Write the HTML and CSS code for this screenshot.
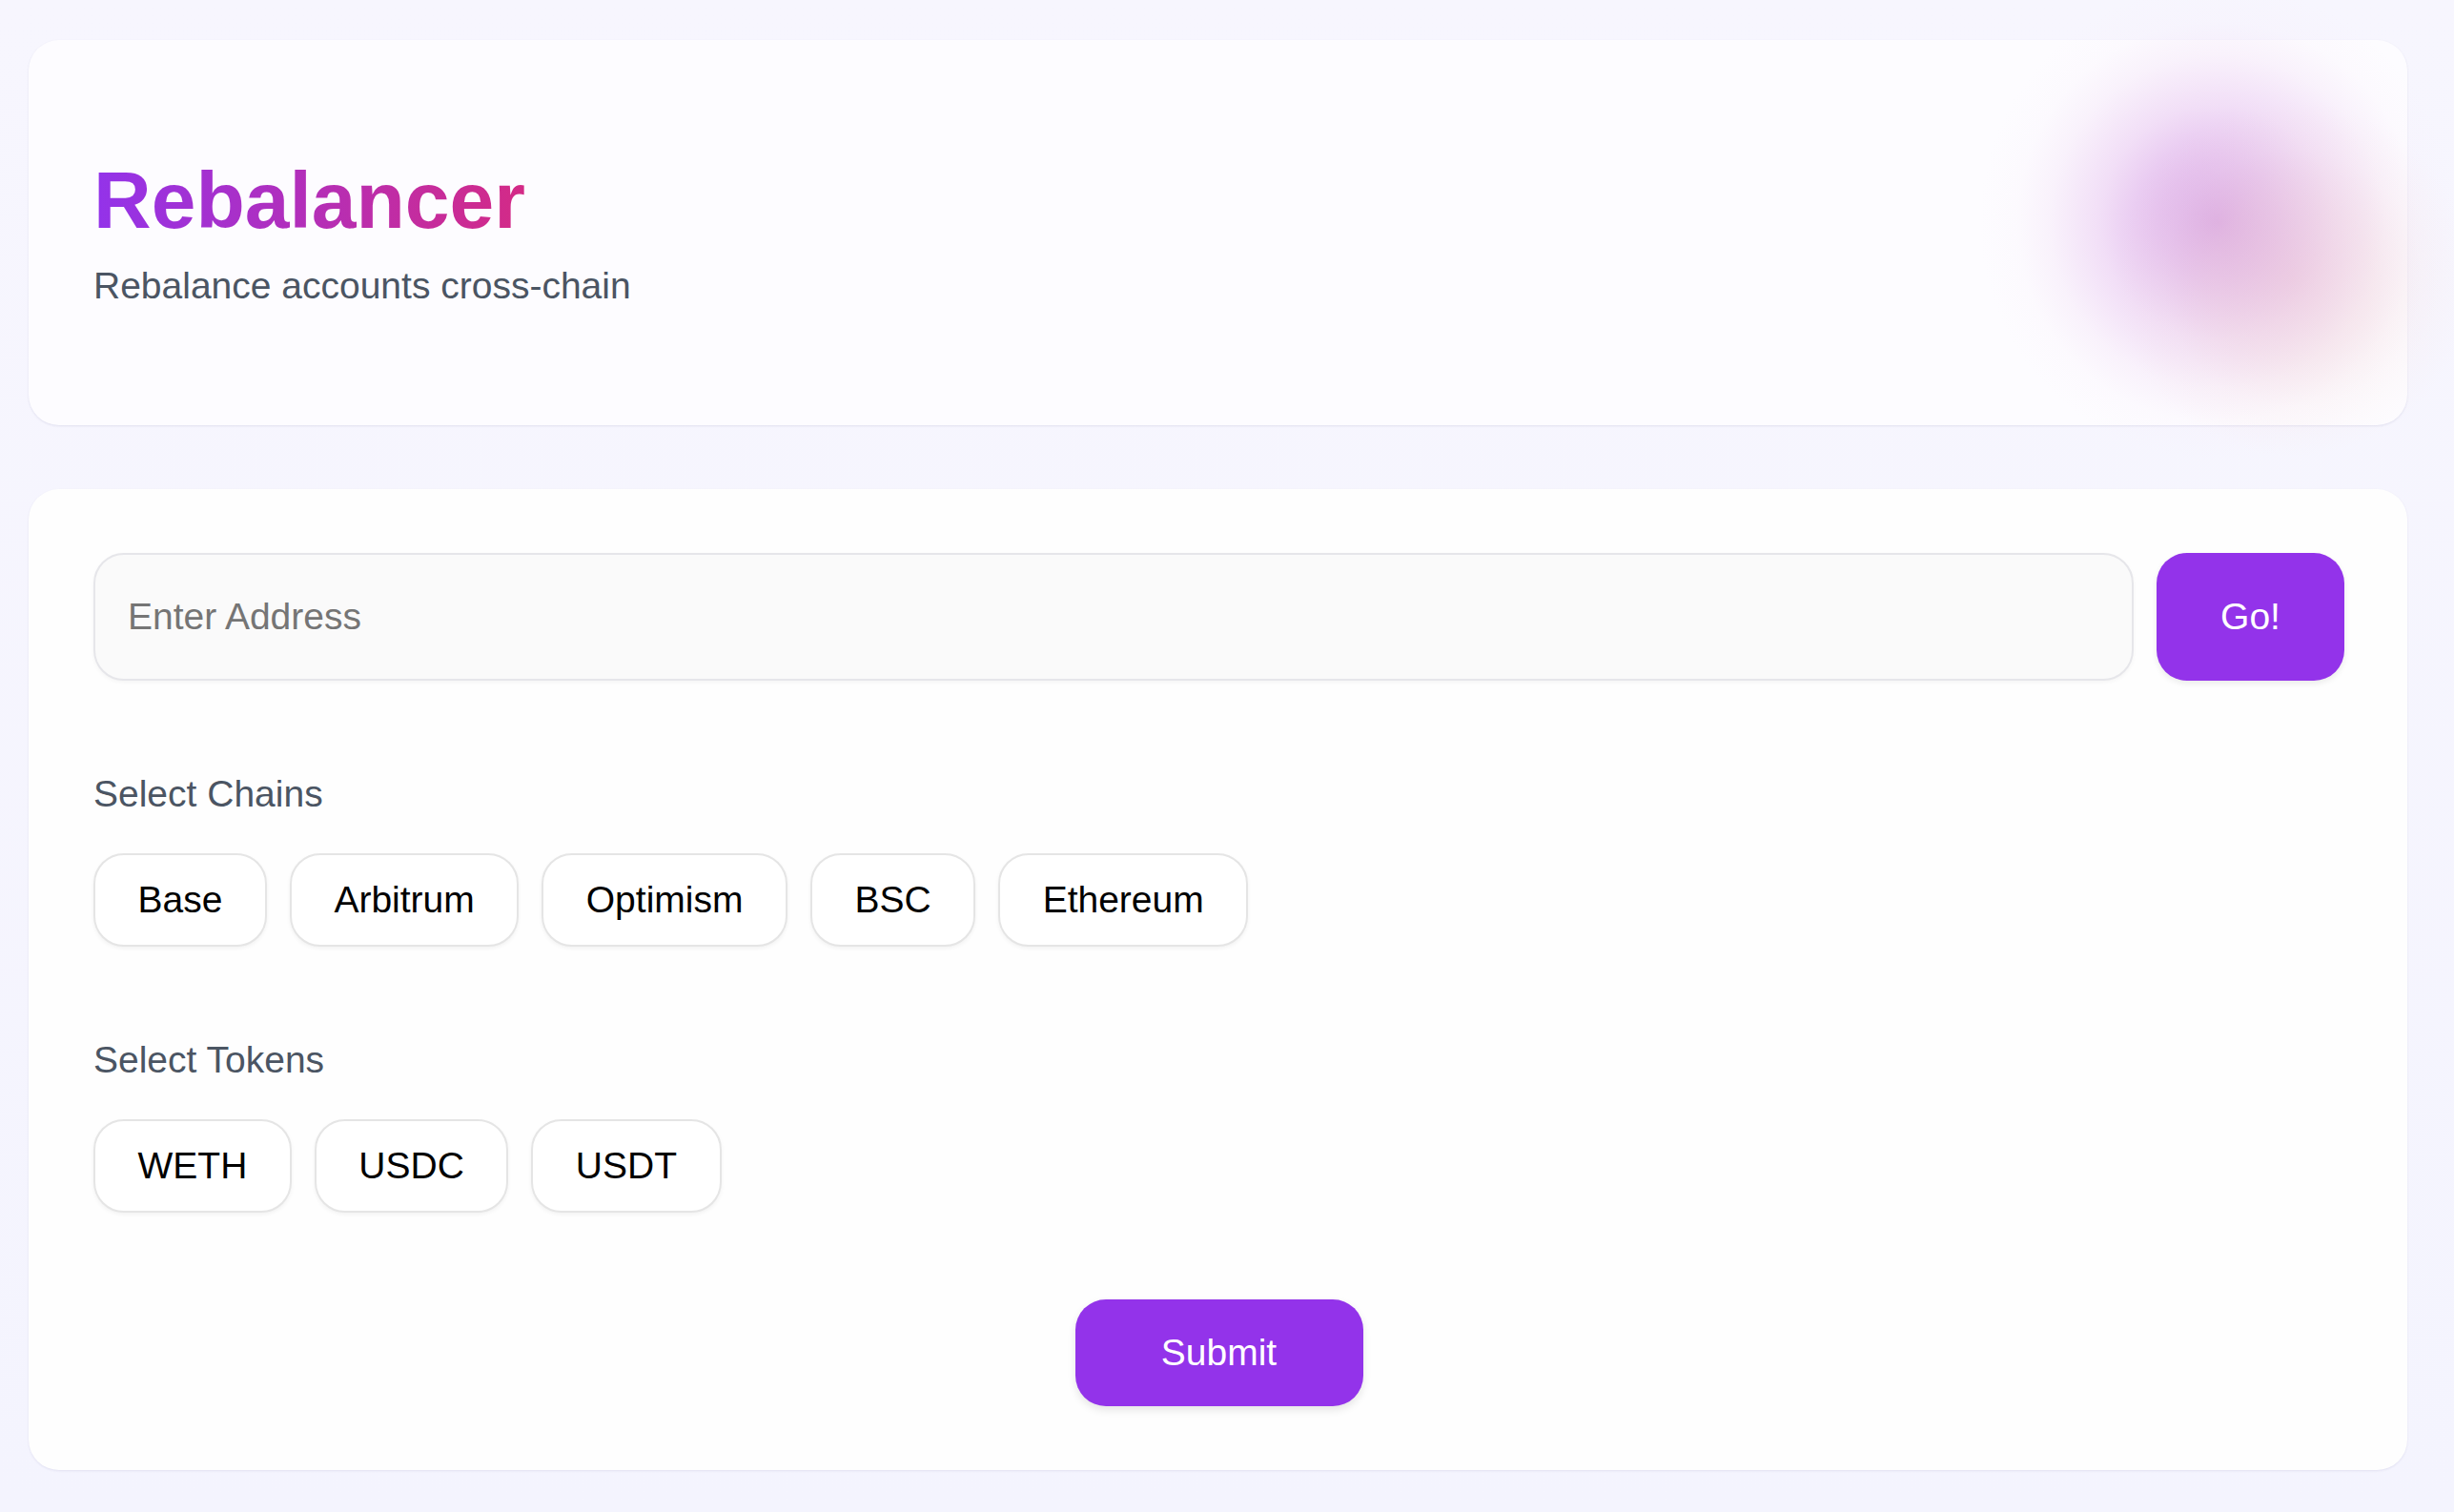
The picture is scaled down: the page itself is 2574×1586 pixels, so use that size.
FILE: index.html
```html
<!DOCTYPE html>
<html lang="en">
<head>
<meta charset="utf-8">
<title>Rebalancer</title>
<link rel="stylesheet" href="styles.css">
</head>
<body>
<div class="page">
  <header class="hero">
    <div class="glow"></div>
    <div class="glow glow-warm"></div>
    <h1 class="title">Rebalancer</h1>
    <p class="subtitle">Rebalance accounts cross-chain</p>
  </header>

  <main class="panel">
    <div class="address-row">
      <input class="address" type="text" placeholder="Enter Address">
      <button class="go" type="button">Go!</button>
    </div>

    <section class="group">
      <h2 class="group-label">Select Chains</h2>
      <div class="chips">
        <button class="chip" type="button">Base</button>
        <button class="chip" type="button">Arbitrum</button>
        <button class="chip" type="button">Optimism</button>
        <button class="chip" type="button">BSC</button>
        <button class="chip" type="button">Ethereum</button>
      </div>
    </section>

    <section class="group">
      <h2 class="group-label">Select Tokens</h2>
      <div class="chips">
        <button class="chip" type="button">WETH</button>
        <button class="chip" type="button">USDC</button>
        <button class="chip" type="button">USDT</button>
      </div>
    </section>

    <div class="actions">
      <button class="submit" type="button">Submit</button>
    </div>
  </main>
</div>
</body>
</html>
```
FILE: styles.css
```css
* { box-sizing: border-box; }

html, body {
  margin: 0;
  padding: 0;
}

body {
  font-family: "Liberation Sans", Arial, Helvetica, sans-serif;
  background: linear-gradient(180deg, #f7f6fe 0%, #f4f4fe 100%);
  min-height: 1586px;
  color: #111;
}

.page {
  padding: 42px 49px 44px 30px;
  display: flex;
  flex-direction: column;
  gap: 67px;
}

.hero {
  position: relative;
  background: #fdfcff;
  border-radius: 32px;
  padding: 120px 68px 124px;
  box-shadow: 0 1px 3px rgba(60, 50, 120, 0.07), 0 1px 2px rgba(60, 50, 120, 0.04);
}

.glow {
  position: absolute;
  width: 620px;
  height: 620px;
  right: -111px;
  top: -119px;
  border-radius: 50%;
  background: radial-gradient(circle at 50% 50%,
    rgba(214, 160, 228, 0.95) 0%,
    rgba(222, 176, 234, 0.8) 14%,
    rgba(232, 198, 240, 0.55) 28%,
    rgba(240, 218, 244, 0.3) 40%,
    rgba(246, 232, 248, 0.12) 48%,
    rgba(250, 240, 250, 0) 57%);
  pointer-events: none;
}

.glow-warm {
  width: 480px;
  height: 480px;
  right: -120px;
  top: 10px;
  background: radial-gradient(circle at 50% 50%,
    rgba(236, 196, 206, 0.45) 0%,
    rgba(240, 210, 212, 0.32) 25%,
    rgba(245, 225, 224, 0.16) 40%,
    rgba(250, 240, 238, 0) 55%);
}

.title {
  position: relative;
  display: inline-block;
  margin: 0;
  font-size: 84px;
  font-weight: 700;
  line-height: normal;
  background: linear-gradient(90deg, #9333ea 0%, #d42a86 100%);
  -webkit-background-clip: text;
  background-clip: text;
  color: transparent;
}

.subtitle {
  position: relative;
  margin: 18px 0 0;
  font-size: 39px;
  line-height: 45px;
  color: #4b5563;
}

.panel {
  background: #fefefe;
  border-radius: 32px;
  padding: 67px 66px 67px 68px;
  box-shadow: 0 1px 3px rgba(60, 50, 120, 0.06), 0 1px 2px rgba(60, 50, 120, 0.04);
}

.address-row {
  display: flex;
  gap: 24px;
}

.address {
  flex: 1;
  height: 134px;
  border: 2px solid #e6e6ea;
  background: #fafafa;
  border-radius: 32px;
  padding: 0 34px;
  font-family: inherit;
  font-size: 39px;
  color: #111;
  outline: none;
  box-shadow: 0 2px 4px rgba(0, 0, 0, 0.04);
}

.address::placeholder {
  color: #757575;
}

.go {
  width: 197px;
  height: 134px;
  border: none;
  border-radius: 32px;
  background: #9333ea;
  color: #ffffff;
  font-family: inherit;
  font-size: 39px;
  box-shadow: 0 3px 6px rgba(0, 0, 0, 0.08);
}

.group {
  margin-top: 96px;
}

.group-label {
  margin: 0 0 40px;
  font-size: 39px;
  font-weight: 400;
  line-height: 45px;
  color: #4b5563;
}

.chips {
  display: flex;
  flex-wrap: wrap;
  gap: 24px;
}

.chip {
  height: 98px;
  padding: 0 44.5px;
  border: 2px solid #e5e5e5;
  border-radius: 32px;
  background: #ffffff;
  color: #000000;
  font-family: inherit;
  font-size: 39px;
  box-shadow: 0 2px 4px rgba(0, 0, 0, 0.05);
}

.actions {
  margin-top: 91px;
  display: flex;
  justify-content: center;
}

.submit {
  width: 302px;
  height: 112px;
  border: none;
  border-radius: 32px;
  background: #9333ea;
  color: #ffffff;
  font-family: inherit;
  font-size: 39px;
  box-shadow: 0 4px 8px rgba(0, 0, 0, 0.1);
}
```
